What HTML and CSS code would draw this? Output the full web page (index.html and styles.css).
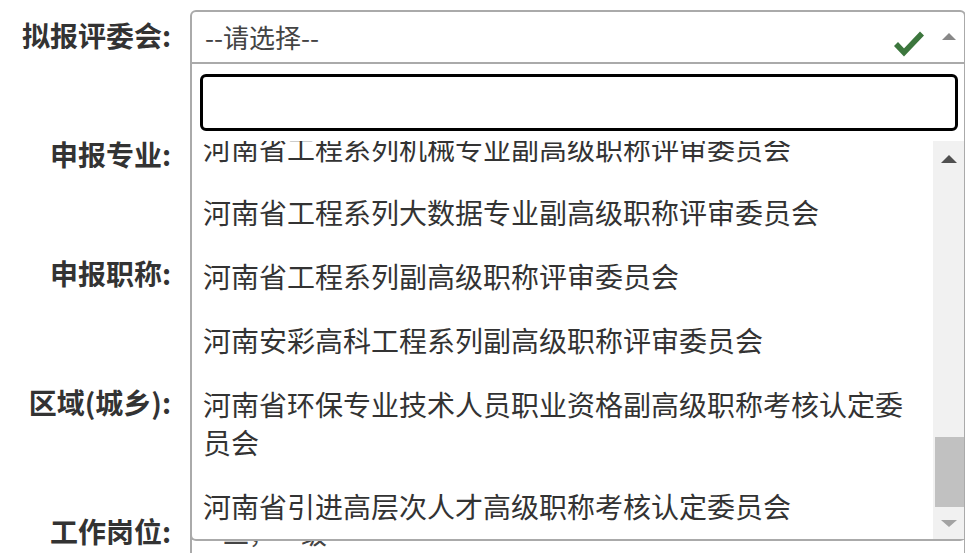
FILE: index.html
```html
<!DOCTYPE html>
<html lang="zh-CN">
<head>
<meta charset="utf-8">
<title>申报表单</title>
<link rel="stylesheet" href="styles.css">
</head>
<body>
<form class="form">
  <div class="row">
    <label class="lbl">拟报评委会:</label>
    <div class="select open">
      <span class="sel-text">--请选择--</span>
      <svg class="ok" width="30" height="28" viewBox="0 0 30 28"><polyline points="2,15 10,23.5 28,4.5" fill="none" stroke="#3c763d" stroke-width="5.5"/></svg>
      <span class="caret up"></span>
      <div class="dropdown">
        <input class="search" type="text">
        <div class="results">
          <ul class="items" style="margin-top:-25px">
            <li>河南省工程系列机械专业副高级职称评审委员会</li>
            <li>河南省工程系列大数据专业副高级职称评审委员会</li>
            <li>河南省工程系列副高级职称评审委员会</li>
            <li>河南安彩高科工程系列副高级职称评审委员会</li>
            <li>河南省环保专业技术人员职业资格副高级职称考核认定委员会</li>
            <li>河南省引进高层次人才高级职称考核认定委员会</li>
            <li>河南省高等学校教师系列高级职称评审委员会</li>
          </ul>
          <div class="sbar">
            <div class="sbtn"><span class="arr-up"></span></div>
            <div class="strack"><div class="thumb" style="margin-top:265px;height:70px"></div></div>
            <div class="sbtn down"><span class="arr-down"></span></div>
          </div>
        </div>
      </div>
    </div>
  </div>
  <div class="row gap-m">
    <label class="lbl">申报专业:</label>
    <div class="select"><span class="sel-text">--请选择--</span></div>
  </div>
  <div class="row gap-m">
    <label class="lbl">申报职称:</label>
    <div class="select"><span class="sel-text">--请选择--</span></div>
  </div>
  <div class="row gap-l">
    <label class="lbl">区域(城乡):</label>
    <div class="select"><span class="sel-text">--请选择--</span></div>
  </div>
  <div class="row gap-l">
    <label class="lbl">工作岗位:</label>
    <div class="select plain"><span class="sel-text">--二，一级</span></div>
  </div>
</form>
</body>
</html>
```
FILE: styles.css
```css
html, body {
  margin: 0;
  padding: 0;
  overflow: hidden;
  background: #fff;
}
body {
  font-family: "Noto Sans CJK SC", "Noto Sans", sans-serif;
  color: #333;
}
.form {
  display: flex;
  flex-direction: column;
  padding-top: 10px;
}
.row {
  display: flex;
  align-items: flex-start;
  height: 54px;
}
.gap-m { margin-top: 65px; }
.gap-l { margin-top: 75px; }
.lbl {
  width: 171px;
  flex: none;
  text-align: right;
  font-weight: bold;
  font-size: 28px;
  line-height: 50px;
  color: #333;
  margin-right: 19px;
}
.select {
  position: relative;
  width: 776px;
  height: 54px;
  flex: none;
  box-sizing: border-box;
  border: 2px solid #aaa;
  border-radius: 6px;
  background: #fff;
  display: flex;
  align-items: center;
  padding-left: 13px;
}
.select.open {
  border-radius: 6px 6px 0 0;
  z-index: 5;
}
.sel-text {
  font-size: 26px;
  color: #444;
  line-height: 50px;
  flex: 1;
}
.ok {
  margin-right: 18px;
  margin-top: 12px;
}
.caret.up {
  width: 0;
  height: 0;
  border-style: solid;
  border-width: 0 7.5px 7px 7.5px;
  border-color: transparent transparent #888 transparent;
  margin-right: 8px;
  margin-top: -2px;
}
.dropdown {
  position: absolute;
  left: -2px;
  top: calc(100% + 2px);
  width: calc(100% + 4px);
  box-sizing: border-box;
  border: 2px solid #aaa;
  border-top: none;
  border-radius: 0 0 6px 6px;
  background: #fff;
  display: flex;
  flex-direction: column;
  z-index: 10;
}
.search {
  display: block;
  box-sizing: border-box;
  height: 57px;
  margin: 10px 6px 10px 8px;
  border: 3px solid #000;
  border-radius: 6px;
  background: #fff;
  outline: none;
  font-size: 26px;
  font-family: inherit;
  padding: 0 10px;
}
.results {
  display: flex;
  height: 398px;
  overflow: hidden;
}
.items {
  list-style: none;
  margin: 0;
  padding: 0;
  flex: 1;
  min-width: 0;
}
.items li {
  font-size: 28px;
  line-height: 38px;
  padding: 13px 11px;
  color: #333;
}
.sbar {
  width: 31px;
  flex: none;
  background: #f1f1f1;
  display: flex;
  flex-direction: column;
}
.sbtn {
  height: 31px;
  flex: none;
  display: flex;
  justify-content: center;
  align-items: flex-start;
  padding-top: 14px;
  box-sizing: border-box;
}
.sbtn.down {
  padding-top: 12px;
}
.arr-up {
  width: 0;
  height: 0;
  border-style: solid;
  border-width: 0 8px 8px 8px;
  border-color: transparent transparent #505050 transparent;
}
.arr-down {
  width: 0;
  height: 0;
  border-style: solid;
  border-width: 7px 8px 0 8px;
  border-color: #a3a3a3 transparent transparent transparent;
}
.strack {
  flex: 1;
  padding-left: 2px;
}
.thumb {
  background: #c1c1c1;
}
```
